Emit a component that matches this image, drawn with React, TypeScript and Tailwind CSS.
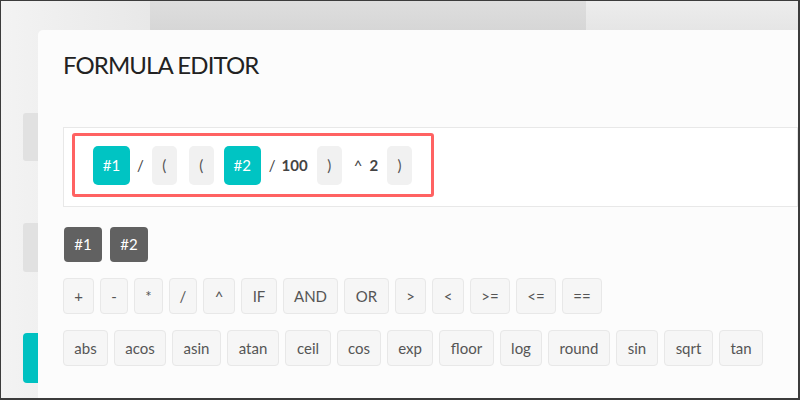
import React from "react";

const ops: [string, string][] = [
  ["+", "w-[31px]"],
  ["-", "w-[28px]"],
  ["*", "w-[29px]"],
  ["/", "w-[28px]"],
  ["^", "w-[32px]"],
  ["IF", "w-[36px]"],
  ["AND", "w-[55px]"],
  ["OR", "w-[45px]"],
  [">", "w-[31px]"],
  ["<", "w-[32px]"],
  [">=", "w-[40px]"],
  ["<=", "w-[40px]"],
  ["==", "w-[40px]"],
];
const fns: [string, string][] = [
  ["abs", "w-[45px]"],
  ["acos", "w-[52px]"],
  ["asin", "w-[49px]"],
  ["atan", "w-[52px]"],
  ["ceil", "w-[46px]"],
  ["cos", "w-[44px]"],
  ["exp", "w-[46px]"],
  ["floor", "w-[55px]"],
  ["log", "w-[42px]"],
  ["round", "w-[62px]"],
  ["sin", "w-[42px]"],
  ["sqrt", "w-[49px]"],
  ["tan", "w-[44px]"],
];

function Btn({ label, w }: { label: string; w: string }) {
  return (
    <button
      className={
        "h-[36px] rounded-[4px] border border-[#e8e8e8] bg-[#f6f6f6] text-[15px] text-[#555] leading-none flex items-center justify-center " +
        w
      }
    >
      {label}
    </button>
  );
}

function Var({ label, cls }: { label: string; cls: string }) {
  return (
    <div className={"h-[39px] w-[37px] rounded-[5px] bg-[#00c4c3] text-white text-[15px] flex items-center justify-center " + cls}>
      {label}
    </div>
  );
}

function Paren({ label, cls }: { label: string; cls: string }) {
  return (
    <div className={"h-[39px] w-[25px] rounded-[5px] bg-[#f1f1f1] text-[#555] text-[15px] flex items-center justify-center " + cls}>
      {label}
    </div>
  );
}

function Txt({ label, cls }: { label: string; cls: string }) {
  return <span className={"text-[15px] text-[#444] " + cls}>{label}</span>;
}

export default function App() {
  return (
    <div
      className="relative w-[800px] h-[400px] overflow-hidden border-t border-l border-r-2 border-b-2 border-[#3c3c3c] bg-[#ececec] flex"
      style={{ fontFamily: "Lato, 'Open Sans', sans-serif" }}
    >
      {/* backdrop */}
      <div className="w-[149px] h-full bg-gradient-to-r from-[#f3f3f3] to-[#e8e8e8] pl-[22px] flex flex-col">
        <div className="mt-[112px] h-[48px] w-[30px] rounded-[3px] bg-[#e1e1e1]" />
        <div className="mt-[62px] h-[49px] w-[30px] rounded-[3px] bg-[#e1e1e1]" />
        <div className="mt-[61px] h-[50px] w-[30px] rounded-[4px] bg-[#00c1c1]" />
      </div>
      <div className="w-[436px] h-[30px] bg-gradient-to-b from-[#dedede] to-[#d6d6d6]" />
      <div className="flex-1 h-[30px] bg-gradient-to-b from-[#ededed] to-[#e5e5e5]" />

      {/* modal */}
      <div className="absolute left-[37px] top-[29px] right-0 bottom-0 bg-[#fcfcfc] rounded-tl-[5px] pl-[25px] pt-[23px] flex flex-col">
        <h1 className="text-[24px] leading-none text-[#222] tracking-[-0.9px]">FORMULA EDITOR</h1>

        <div className="mt-[50px] h-[80px] bg-white border border-[#e8e8e8] pl-[8px] pt-[5px]">
          <div className="inline-flex items-center border-[3px] border-[#ff6262] rounded-[3px] h-[64px] pl-[18px] pr-[19px]">
            <Var label="#1" cls="" />
            <Txt label="/" cls="ml-[7px]" />
            <Paren label="(" cls="ml-[8px]" />
            <Paren label="(" cls="ml-[12px]" />
            <Var label="#2" cls="ml-[10px]" />
            <Txt label="/" cls="ml-[8px]" />
            <Txt label="100" cls="ml-[6px] font-bold" />
            <Paren label=")" cls="ml-[9px]" />
            <Txt label="^" cls="ml-[12px]" />
            <Txt label="2" cls="ml-[7px] font-bold" />
            <Paren label=")" cls="ml-[9px]" />
          </div>
        </div>

        <div className="mt-[20px] flex gap-[8px] pl-[1px]">
          <div className="h-[35px] w-[38px] rounded-[4px] bg-[#616161] text-white text-[15px] flex items-center justify-center">#1</div>
          <div className="h-[35px] w-[38px] rounded-[4px] bg-[#616161] text-white text-[15px] flex items-center justify-center">#2</div>
        </div>

        <div className="mt-[16px] flex gap-[6px]">
          {ops.map(([o, w]) => (
            <Btn key={o} label={o} w={w} />
          ))}
        </div>

        <div className="mt-[16px] flex gap-[6px]">
          {fns.map(([o, w]) => (
            <Btn key={o} label={o} w={w} />
          ))}
        </div>
      </div>
    </div>
  );
}
